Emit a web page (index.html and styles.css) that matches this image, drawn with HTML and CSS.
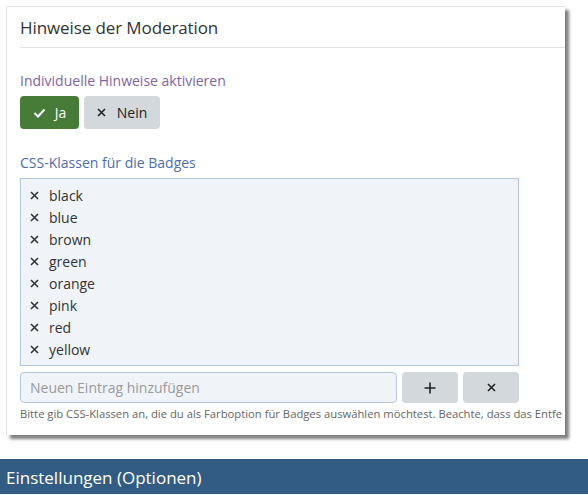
FILE: index.html
```html
<!DOCTYPE html>
<html lang="de">
<head>
    <meta charset="UTF-8">
    <meta name="viewport" content="width=device-width, initial-scale=1.0">
    <title>Hinweise der Moderation</title>
    <link rel="stylesheet" href="styles.css">
</head>
<body>
    <div class="card">
        <h2 class="card-title">Hinweise der Moderation</h2>

        <div class="field">
            <label class="field-label label-toggle">Individuelle Hinweise aktivieren</label>
            <div class="toggle">
                <button class="btn btn-yes">
                    <svg width="13" height="10" viewBox="0 0 13 10"><polyline points="1.5,5 5,8.5 11.5,1.5" fill="none" stroke="#fff" stroke-width="2"/></svg>
                    Ja
                </button>
                <button class="btn btn-no">
                    <svg width="9" height="9" viewBox="0 0 9 9"><path d="M1 1L8 8M8 1L1 8" stroke="#222" stroke-width="1.6"/></svg>
                    Nein
                </button>
            </div>
        </div>

        <div class="field">
            <label class="field-label label-list">CSS-Klassen für die Badges</label>
            <ul class="tag-list">
                <li><svg width="9" height="9" viewBox="0 0 9 9"><path d="M1 1L8 8M8 1L1 8" stroke="#333" stroke-width="1.6"/></svg>black</li>
                <li><svg width="9" height="9" viewBox="0 0 9 9"><path d="M1 1L8 8M8 1L1 8" stroke="#333" stroke-width="1.6"/></svg>blue</li>
                <li><svg width="9" height="9" viewBox="0 0 9 9"><path d="M1 1L8 8M8 1L1 8" stroke="#333" stroke-width="1.6"/></svg>brown</li>
                <li><svg width="9" height="9" viewBox="0 0 9 9"><path d="M1 1L8 8M8 1L1 8" stroke="#333" stroke-width="1.6"/></svg>green</li>
                <li><svg width="9" height="9" viewBox="0 0 9 9"><path d="M1 1L8 8M8 1L1 8" stroke="#333" stroke-width="1.6"/></svg>orange</li>
                <li><svg width="9" height="9" viewBox="0 0 9 9"><path d="M1 1L8 8M8 1L1 8" stroke="#333" stroke-width="1.6"/></svg>pink</li>
                <li><svg width="9" height="9" viewBox="0 0 9 9"><path d="M1 1L8 8M8 1L1 8" stroke="#333" stroke-width="1.6"/></svg>red</li>
                <li><svg width="9" height="9" viewBox="0 0 9 9"><path d="M1 1L8 8M8 1L1 8" stroke="#333" stroke-width="1.6"/></svg>yellow</li>
            </ul>
            <div class="add-row">
                <input class="add-input" type="text" placeholder="Neuen Eintrag hinzufügen">
                <button class="btn btn-square">
                    <svg width="12" height="12" viewBox="0 0 12 12"><path d="M6 0.5V11.5M0.5 6H11.5" stroke="#222" stroke-width="1.6"/></svg>
                </button>
                <button class="btn btn-square">
                    <svg width="9" height="9" viewBox="0 0 9 9"><path d="M1 1L8 8M8 1L1 8" stroke="#222" stroke-width="1.6"/></svg>
                </button>
            </div>
            <p class="help">Bitte gib CSS-Klassen an, die du als Farboption für Badges auswählen möchtest. Beachte, dass das Entfe</p>
        </div>
    </div>

    <div class="section-bar">Einstellungen (Optionen)</div>
</body>
</html>
```

FILE: styles.css
```css
:root {
    --text-color: #333;
    --border-light: #e4e4e4;
    --btn-grey: #d3d8dc;
    --btn-green: #477b38;
    --field-bg: #f0f4f9;
    --field-border: #b4c6e2;
    --bar-bg: #325c83;
}

body {
    font-family: 'Open Sans', 'Noto Sans', sans-serif;
    margin: 0;
    padding: 0;
    background-color: #fff;
    color: var(--text-color);
}

.card {
    position: relative;
    margin: 6px 23px 0 6px;
    padding: 0 0 13px 13px;
    background-color: #fff;
    border-top: 1px solid var(--border-light);
    border-left: 1px solid var(--border-light);
    box-shadow: 4px 4px 3px rgba(0, 0, 0, 0.5);
    overflow: hidden;
}

/* the top-left corner of the frame is open in the original */
.card::before {
    content: '';
    position: absolute;
    top: -1px;
    left: -1px;
    width: 13px;
    height: 12px;
    background-color: #fff;
}

.card-title {
    margin: 0;
    padding: 9px 0 0;
    height: 31px;
    font-size: 17px;
    font-weight: normal;
    letter-spacing: -0.1px;
    border-bottom: 1px solid var(--border-light);
}

.field {
    margin-top: 23px;
}

.field + .field {
    margin-top: 24px;
}

.field-label {
    display: block;
    font-size: 14px;
    line-height: 20px;
    margin-bottom: 5px;
}

.label-toggle {
    color: #7f64a6;
}

.label-list {
    color: #4f6cac;
}

.toggle {
    display: flex;
    gap: 5px;
}

.btn {
    display: inline-flex;
    align-items: center;
    justify-content: center;
    gap: 9px;
    height: 33px;
    border: none;
    border-radius: 4px;
    font-family: inherit;
    font-size: 14px;
    cursor: pointer;
}

.btn-yes {
    width: 59px;
    background-color: var(--btn-green);
    color: #fff;
}

.btn-no {
    width: 76px;
    gap: 11px;
    background-color: var(--btn-grey);
    color: #222;
}

.tag-list {
    list-style: none;
    margin: 0;
    padding: 5px 10px 5px 9px;
    width: 478px;
    background-color: var(--field-bg);
    border: 1px solid var(--field-border);
}

.tag-list li {
    display: flex;
    align-items: center;
    gap: 10px;
    height: 22px;
    font-size: 14px;
}

.add-row {
    display: flex;
    gap: 5px;
    margin-top: 6px;
    width: 499px;
}

.add-input {
    flex: 1;
    height: 31px;
    box-sizing: border-box;
    padding: 0 9px;
    background-color: var(--field-bg);
    border: 1px solid var(--field-border);
    border-radius: 4px;
    font-family: inherit;
    font-size: 14px;
}

.add-input::placeholder {
    color: #9a9a9a;
}

.btn-square {
    width: 56px;
    height: 31px;
    background-color: var(--btn-grey);
}

.help {
    margin: 3px 0 0;
    font-size: 11.25px;
    line-height: 16px;
    color: #666;
    white-space: nowrap;
}

.section-bar {
    margin-top: 24px;
    height: 35px;
    line-height: 37px;
    padding-left: 6px;
    background-color: var(--bar-bg);
    color: #fff;
    font-size: 17px;
}
```
